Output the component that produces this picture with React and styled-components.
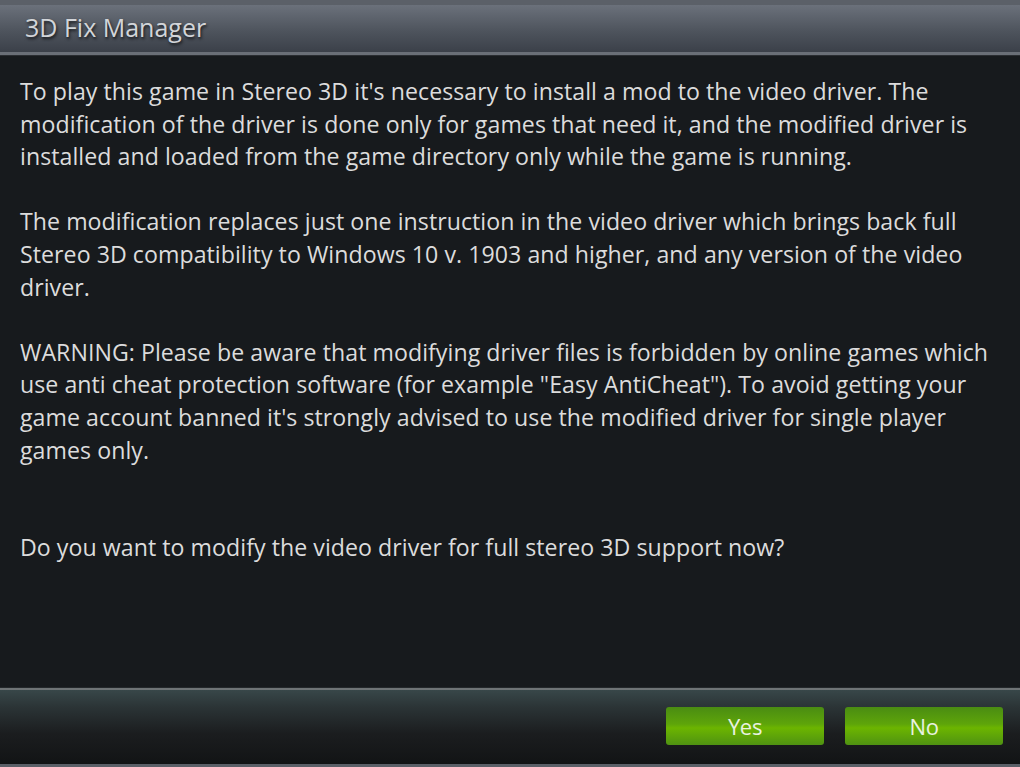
import React from "react";
import styled, { createGlobalStyle } from "styled-components";

const GlobalStyle = createGlobalStyle`
  html, body {
    margin: 0;
    padding: 0;
    background: #171a1d;
  }
  #root {
    height: 767px;
  }
`;

const Window = styled.div`
  display: flex;
  flex-direction: column;
  width: 1020px;
  height: 767px;
  overflow: hidden;
  background: #171a1d;
  font-family: "Open Sans", "Noto Sans", sans-serif;
`;

const TitleBar = styled.div`
  height: 55px;
  box-sizing: border-box;
  display: flex;
  align-items: center;
  padding-left: 25px;
  padding-bottom: 4px;
  border-top: 5px solid #5b6068;
  border-bottom: 3px solid #6a6f77;
  background: linear-gradient(#6b717b, #4e545d 55%, #3b4049);
  box-shadow: 0 1px 0 #2a2d31;
`;

const Title = styled.h1`
  margin: 0;
  font-size: 25px;
  font-weight: 400;
  color: #d2d5d9;
  text-shadow: 1px 2px 3px #15171a;
`;

const Body = styled.div`
  flex: 1;
  padding: 20px 20px 0;
  color: #dcdcdc;
  font-size: 23.15px;
  line-height: 32.6px;
  letter-spacing: 0.05px;
  white-space: nowrap;
`;

const Para = styled.p`
  margin: 0 0 ${(props) => props.gap || 32.6}px;
`;

const Footer = styled.div`
  height: 80px;
  box-sizing: border-box;
  display: flex;
  align-items: center;
  justify-content: flex-end;
  gap: 21px;
  padding-right: 17px;
  border-top: 1px solid #24282b;
  box-shadow: inset 0 2px 0 #6f7476;
  border-bottom: 3px solid #5b6068;
  background: linear-gradient(#384749 2px, #2b3436 25%, #1b1d1f 60%, #121415);
`;

const Button = styled.button`
  width: 158px;
  height: 38px;
  border: none;
  border-radius: 3px;
  background: linear-gradient(#4a8c12, #5ea50a 45%, #6cb500 55%, #4f9212);
  color: #e9f2e0;
  font-family: "Open Sans", "Noto Sans", sans-serif;
  font-size: 22px;
  letter-spacing: -0.3px;
  padding: 0;
  cursor: pointer;
`;

export default function App() {
  return (
    <>
      <GlobalStyle />
      <Window>
        <TitleBar>
          <Title>3D Fix Manager</Title>
        </TitleBar>
        <Body>
          <Para>
            To play this game in Stereo 3D it's necessary to install a mod to the video driver. The
            <br />
            modification of the driver is done only for games that need it, and the modified driver is
            <br />
            installed and loaded from the game directory only while the game is running.
          </Para>
          <Para>
            The modification replaces just one instruction in the video driver which brings back full
            <br />
            Stereo 3D compatibility to Windows 10 v. 1903 and higher, and any version of the video
            <br />
            driver.
          </Para>
          <Para gap={65.2}>
            WARNING: Please be aware that modifying driver files is forbidden by online games which
            <br />
            use anti cheat protection software (for example "Easy AntiCheat"). To avoid getting your
            <br />
            game account banned it's strongly advised to use the modified driver for single player
            <br />
            games only.
          </Para>
          <Para>Do you want to modify the video driver for full stereo 3D support now?</Para>
        </Body>
        <Footer>
          <Button>Yes</Button>
          <Button>No</Button>
        </Footer>
      </Window>
    </>
  );
}
